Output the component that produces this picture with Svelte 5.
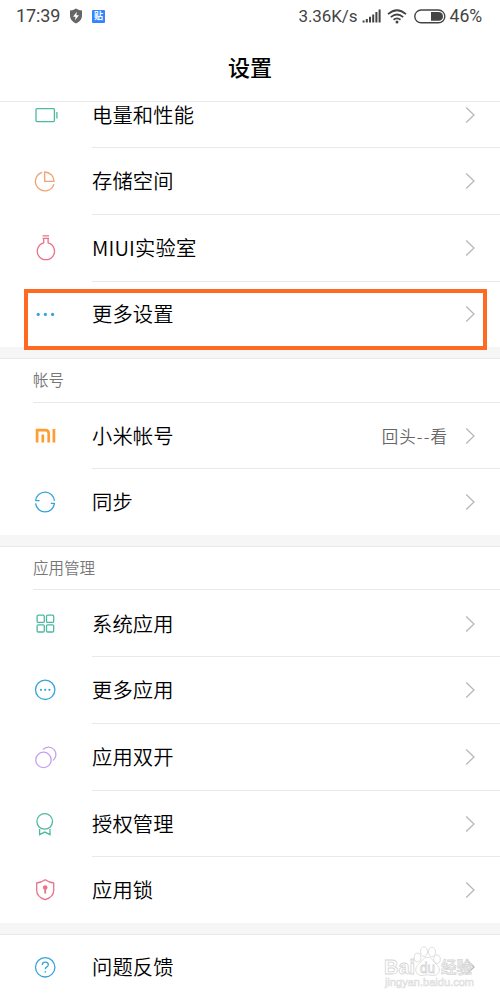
<script lang="ts">
  type Item = { icon: string; label: string; value?: string; marked?: boolean };
  type Section = { title?: string; items: Item[] };

  const sections: Section[] = [
    {
      items: [
        { icon: "battery", label: "电量和性能" },
        { icon: "storage", label: "存储空间" },
        { icon: "lab", label: "MIUI实验室" },
        { icon: "more", label: "更多设置", marked: true },
      ],
    },
    {
      title: "帐号",
      items: [
        { icon: "mi", label: "小米帐号", value: "回头--看" },
        { icon: "sync", label: "同步" },
      ],
    },
    {
      title: "应用管理",
      items: [
        { icon: "grid", label: "系统应用" },
        { icon: "apps", label: "更多应用" },
        { icon: "dual", label: "应用双开" },
        { icon: "badge", label: "授权管理" },
        { icon: "lock", label: "应用锁" },
      ],
    },
    {
      items: [{ icon: "help", label: "问题反馈" }],
    },
  ];
</script>

{#snippet glyph(name: string)}
  <svg class="icon {name}" viewBox="0 0 24 24" width="24" height="24">
    {#if name === "battery"}
      <rect x="3" y="5.6" width="18.4" height="13" rx="1" />
      <path d="M23.9 9v6.4" />
    {:else if name === "storage"}
      <path d="M9.2 3.4A9.4 9.4 0 1 0 20.9 15.1" />
      <path d="M11.7 3v9.3h9.4a9.4 9.4 0 0 0-9.4-9.3z" />
    {:else if name === "lab"}
      <path d="M9.6 -.1h6.4M9.6 2.3h6.4" />
      <path d="M10.7 2.3v4.5a8.6 8.6 0 1 0 4.4 0V2.3" />
    {:else if name === "more"}
      <circle class="dot" cx="5.2" cy="12.4" r="1.6" />
      <circle class="dot" cx="12.4" cy="12.4" r="1.6" />
      <circle class="dot" cx="19.6" cy="12.4" r="1.6" />
    {:else if name === "mi"}
      <path d="M4.1 18.6V6.1h8.2q3.4 0 3.4 3.4v9.1M9.8 10.5v8.1M20.9 4.9v13.7" />
    {:else if name === "sync"}
      <path d="M2.6 10.6A9.5 9.5 0 0 1 21.5 10.9M2.3 10.6H6.6" />
      <path d="M2.6 13.4A9.5 9.5 0 0 0 21.5 13.4M17.8 13.4H22" />
    {:else if name === "grid"}
      <rect x="4.1" y="3.2" width="7.2" height="7.2" rx="1.2" />
      <rect x="13.5" y="3.2" width="7.2" height="7.2" rx="1.2" />
      <rect x="4.1" y="12.8" width="7.2" height="7.2" rx="1.2" />
      <rect x="13.5" y="12.8" width="7.2" height="7.2" rx="1.2" />
    {:else if name === "apps"}
      <circle cx="12.2" cy="11.8" r="9.7" />
      <circle class="dot" cx="8" cy="11.8" r="1.1" />
      <circle class="dot" cx="12.2" cy="11.8" r="1.1" />
      <circle class="dot" cx="16.4" cy="11.8" r="1.1" />
    {:else if name === "dual"}
      <circle cx="10.5" cy="14.9" r="7.7" />
      <path d="M9.9 4.7A7.4 7.4 0 1 1 20 15.4" />
    {:else if name === "badge"}
      <circle cx="11.7" cy="9.4" r="7.8" />
      <path d="M6.6 16.9v5.8l5.2-2.6 5.2 2.6v-5.8" />
    {:else if name === "lock"}
      <path d="M12.2 1.8q4 2.8 8.5 3.2v7.4q0 6.3-8.5 9.3-8.5-3-8.5-9.3V5q4.5-.4 8.5-3.2z" />
      <circle class="dot" cx="12.2" cy="9.5" r="2.3" />
      <path class="key" d="M12.2 9.6v6" />
    {:else if name === "help"}
      <circle cx="12.2" cy="12.3" r="9.7" />
      <path d="M9.3 10q0-2.8 3-2.8t3 2.5q0 1.3-1.5 2.2-1.5.9-1.5 2.4" />
      <circle class="dot" cx="12.3" cy="16.9" r=".8" />
    {/if}
  </svg>
{/snippet}

<div class="screen">
  <header>
    <div class="status">
      <span class="clock">17:39</span>
      <svg class="shield" width="14" height="16" viewBox="0 0 14 16">
        <path d="M7 .6q3 1.8 6 2v5.2q0 5-6 7.6-6-2.6-6-7.6V2.6q3-.2 6-2z" fill="#666" />
        <path d="M7.8 3.8 4 8.8h2.5L6 12.2l4-5H7.4z" fill="#fff" />
      </svg>
      <span class="tile">贴</span>
      <span class="speed">3.36K/s</span>
      <svg class="signal" width="19" height="14" viewBox="0 0 19 14">
        <path d="M1.6 11.5v2M4.8 10v3.5M8 7.8v5.7M11.2 5.6v7.9M14.4 3v10.5M17.6 .5v13" />
      </svg>
      <svg class="wifi" width="20" height="15" viewBox="0 0 20 15">
        <path d="M1 5.2q9-8 18 0M3.8 8.1q6.2-5.2 12.4 0M6.5 10.8q3.5-2.8 7 0" />
        <circle cx="10" cy="13" r="1.5" />
      </svg>
      <svg class="power" width="32" height="15" viewBox="0 0 32 15">
        <rect class="shell" x=".8" y="1" width="30" height="12.8" rx="6.4" />
        <path d="M17 3h7.6a4.4 4.4 0 0 1 0 8.8H17z" />
      </svg>
      <span class="percent">46%</span>
    </div>
    <h1>设置</h1>
  </header>

  <main>
    {#each sections as section}
      <section>
        {#if section.title}
          <h2>{section.title}</h2>
        {/if}
        {#each section.items as item}
          <div class="row" class:marked={item.marked}>
            <div class="lead">{@render glyph(item.icon)}</div>
            <div class="body">
              <span class="label">{item.label}</span>
              {#if item.value}
                <span class="value">{item.value}</span>
              {/if}
              <svg class="chevron" width="11" height="18" viewBox="0 0 11 18">
                <path d="M1.2 1.5 9 9l-7.8 7.5" />
              </svg>
            </div>
          </div>
        {/each}
      </section>
    {/each}
  </main>

  <svg class="watermark" width="100" height="52" viewBox="0 0 100 52">
    <g class="outline">
      <text x="3" y="35" font-size="20" font-weight="700" textLength="31" lengthAdjust="spacingAndGlyphs">Bai</text>
      <ellipse cx="36.5" cy="18.5" rx="3.3" ry="4.4" />
      <ellipse cx="43" cy="12.6" rx="3.5" ry="4.8" />
      <ellipse cx="51" cy="12.9" rx="3.5" ry="4.8" />
      <ellipse cx="56" cy="20.2" rx="3.3" ry="4.2" />
      <path d="M46.5 18.2c-4.8 0-5.6 4.8-9 7.2-4.5 3.4-3.4 10.6 2.5 11 3 .2 4-.5 6.5-.5s3.7.7 6.7.5c5.8-.4 6.8-7.6 2.3-11-3.4-2.4-4.2-7.2-9-7.2z" />
      <text x="39" y="34" font-size="14" textLength="15" lengthAdjust="spacingAndGlyphs">du</text>
      <text x="60" y="34" font-size="16" font-weight="500" textLength="31" lengthAdjust="spacingAndGlyphs">经验</text>
    </g>
    <text class="site" x="4" y="47" font-size="10.5" textLength="89" lengthAdjust="spacingAndGlyphs">jingyan.baidu.com</text>
  </svg>
</div>

<style>
  :global(body) {
    background: #fff;
  }

  .screen {
    position: relative;
    width: 500px;
    height: 1000px;
    overflow: hidden;
    display: flex;
    flex-direction: column;
    background: #fff;
    color: #000;
    font-family: "Noto Sans CJK SC", "Noto Sans", sans-serif;
  }

  header {
    box-sizing: border-box;
    height: 102px;
    flex: none;
    border-bottom: 1px solid #e9e9e9;
    background: #fff;
  }

  .status {
    display: flex;
    align-items: center;
    height: 32px;
    padding: 0 16px;
    color: #444;
    font-family: Roboto, sans-serif;
    font-size: 18px;
    line-height: 32px;
  }

  .clock {
    width: 44px;
    letter-spacing: -0.1px;
  }

  .shield {
    margin-left: 9px;
  }

  .tile {
    width: 13px;
    height: 13px;
    margin-left: 9px;
    border-radius: 1px;
    background: #3385ff;
    color: #fff;
    font: 700 9px/12px "Noto Sans CJK SC", sans-serif;
    text-align: center;
  }

  .speed {
    width: 59px;
    margin-left: auto;
    font-size: 17px;
    letter-spacing: -0.1px;
    white-space: nowrap;
  }

  .signal {
    margin-left: 4px;
    fill: none;
    stroke: #444;
    stroke-width: 2;
  }

  .wifi {
    margin-left: 6px;
    fill: #444;
  }

  .wifi path {
    fill: none;
    stroke: #444;
    stroke-width: 1.8;
  }

  .power {
    margin-left: 7px;
    fill: #444;
  }

  .shell {
    fill: none;
    stroke: #444;
    stroke-width: 1.4;
  }

  .percent {
    width: 34.5px;
    margin-left: 4px;
    font-size: 17.6px;
    white-space: nowrap;
  }

  h1 {
    margin: 0;
    font-size: 22px;
    font-weight: 500;
    line-height: 68px;
    text-align: center;
  }

  main {
    flex: 1;
    min-height: 0;
    overflow: hidden;
  }

  section:first-child {
    margin-top: -20.75px;
  }

  section + section {
    border-top: 11px solid #f6f6f6;
  }

  section + section::before {
    content: "";
    display: block;
    height: 1px;
    margin-bottom: -1px;
    background: #e9e9e9;
  }

  h2 {
    box-sizing: border-box;
    height: 44.5px;
    margin: 0 0 0 33px;
    border-bottom: 1px solid #e9e9e9;
    color: #777;
    font-size: 15.5px;
    font-weight: 350;
    line-height: 43px;
  }

  .row {
    position: relative;
    display: flex;
    height: 66.75px;
  }

  .row:last-child {
    height: 65.5px;
  }

  .lead {
    width: 92px;
    padding-left: 33px;
    box-sizing: border-box;
    display: flex;
    align-items: center;
  }

  .body {
    flex: 1;
    display: flex;
    align-items: center;
    padding: 1px 24px 0 0;
    border-bottom: 1px solid #e9e9e9;
  }

  .row:last-child .body {
    border-bottom-color: transparent;
  }

  .marked::after {
    content: "";
    position: absolute;
    z-index: 1;
    top: 7.5px;
    left: 24px;
    width: 455px;
    height: 53px;
    border: 4px solid #ff6a22;
  }

  .label {
    font-size: 20.3px;
    font-weight: 350;
    letter-spacing: 0.15px;
    line-height: 29px;
    padding-bottom: 1px;
  }

  .value {
    margin-left: auto;
    color: #666;
    font-size: 16.5px;
    font-weight: 350;
    letter-spacing: 1.1px;
  }

  .chevron {
    margin-left: auto;
    fill: none;
    stroke: #b8b8b8;
    stroke-width: 1.3;
  }

  .value + .chevron {
    margin-left: 17px;
  }

  .icon {
    overflow: visible;
    fill: none;
    stroke: currentColor;
    stroke-width: 1.3;
  }

  .dot {
    fill: currentColor;
    stroke: none;
  }

  .key {
    stroke-width: 1.8;
  }

  .battery,
  .grid,
  .badge {
    color: #4fb8a0;
  }

  .storage {
    color: #f3a173;
  }

  .lab,
  .lock {
    color: #e8738a;
  }

  .more,
  .sync,
  .apps,
  .help {
    color: #37a3da;
  }

  .mi {
    color: #ff9d33;
    stroke-width: 2.7;
  }

  .dual {
    color: #c5a2f0;
  }

  .watermark {
    position: absolute;
    left: 381px;
    top: 939px;
    font-family: "Liberation Sans", "Noto Sans CJK SC", sans-serif;
  }

  .outline {
    fill: #fff;
    fill-opacity: 0.4;
    stroke: #d5d5d5;
    stroke-width: 0.8;
  }

  .site {
    fill: #fff;
    stroke: #dcdcdc;
    stroke-width: 0.6;
  }
</style>
